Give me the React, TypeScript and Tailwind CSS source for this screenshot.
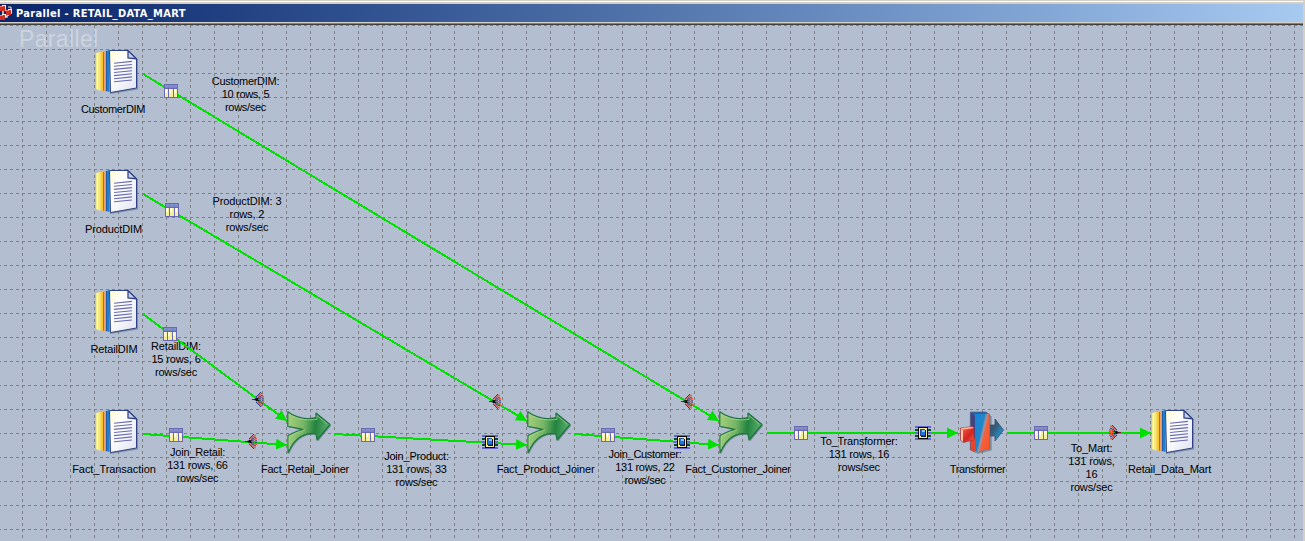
import React from "react";

const LINK = "#00e000";

const docs: [number, number][] = [[95, 49], [95, 169], [95, 289], [95, 409], [1151, 409]];
const joiners = [287, 527, 719];
const tables: [number, number][] = [[164, 84], [165, 203], [163, 327], [169, 428], [361, 428], [601, 428], [794, 426], [1034, 426]];
const chips: [number, number][] = [[482, 435], [674, 435], [915, 426]];
const fans: [number, number][] = [[252, 392], [245, 434], [489, 394], [681, 394]];

const links: [number, number, number, number][] = [
  [143, 74, 719, 421],
  [143, 194, 527, 421],
  [143, 314, 287, 421],
  [143, 434, 287, 445],
  [334, 434, 527, 445],
  [574, 434, 719, 445],
  [767, 433, 958, 433],
  [1007, 433, 1151, 433],
];

const labels: { x: number; y: number; ls?: number; lines: string[] }[] = [
  { x: 113, y: 103, ls: -0.35, lines: ["CustomerDIM"] },
  { x: 113.5, y: 223, ls: -0.12, lines: ["ProductDIM"] },
  { x: 114, y: 343, ls: -0.15, lines: ["RetailDIM"] },
  { x: 114, y: 463, ls: -0.06, lines: ["Fact_Transaction"] },
  { x: 305, y: 463, ls: -0.2, lines: ["Fact_Retail_Joiner"] },
  { x: 545.5, y: 463, ls: -0.2, lines: ["Fact_Product_Joiner"] },
  { x: 738, y: 463, ls: -0.3, lines: ["Fact_Customer_Joiner"] },
  { x: 977.5, y: 463, ls: -0.35, lines: ["Transformer"] },
  { x: 1169.5, y: 463, ls: -0.15, lines: ["Retail_Data_Mart"] },
  { x: 245.5, y: 75, ls: -0.3, lines: ["CustomerDIM:", "10 rows, 5", "rows/sec"] },
  { x: 247, y: 195, ls: -0.1, lines: ["ProductDIM: 3", "rows, 2", "rows/sec"] },
  { x: 176, y: 340, ls: -0.15, lines: ["RetailDIM:", "15 rows, 6", "rows/sec"] },
  { x: 197.5, y: 446, ls: -0.2, lines: ["Join_Retail:", "131 rows, 66", "rows/sec"] },
  { x: 416.5, y: 450, ls: -0.2, lines: ["Join_Product:", "131 rows, 33", "rows/sec"] },
  { x: 645, y: 448, ls: -0.3, lines: ["Join_Customer:", "131 rows, 22", "rows/sec"] },
  { x: 859, y: 435, ls: -0.2, lines: ["To_Transformer:", "131 rows, 16", "rows/sec"] },
  { x: 1091.5, y: 442, ls: -0.15, lines: ["To_Mart:", "131 rows,", "16", "rows/sec"] },
];

function DocIcon({ x, y }: { x: number; y: number }) {
  return (
    <g transform={`translate(${x} ${y})`}>
      <path d="M15 44.3L42.3 39.8V11" fill="none" stroke="#59758c" strokeWidth="1.5" opacity=".6" />
      <path d="M1 4L5 3V42L1 40Z" fill="#f3ea8a" />
      <path d="M2.5 4V40" stroke="#fdf9b8" />
      <path d="M5 3L8 2.5V42L5 41Z" fill="#f6c52c" />
      <path d="M5.7 3.5V41" stroke="#fbe27a" strokeWidth=".8" />
      <path d="M8 2.5L11 2V42.5L8 41.5Z" fill="#f2a06c" />
      <path d="M8.5 3V41.5" stroke="#d05c30" />
      <path d="M11 2L14.5 1V43L11 42Z" fill="#1c80cc" />
      <path d="M11.4 2V42" stroke="#24509a" strokeWidth=".8" />
      <path d="M14.5 1.5H33L41.5 10V39L15.5 43.5Z" fill="url(#paper)" stroke="#304080" />
      <path d="M33 1.5V9L41.5 10Z" fill="#c7d3ec" stroke="#304080" strokeWidth="1.3" />
      {[0, 1, 2, 3, 4, 5, 6].map((i) => (
        <path key={i} d={`M19 ${14.2 + i * 3.1}L37 ${12.4 + i * 3.1}`} stroke="#6869ae" strokeWidth="1.1" />
      ))}
    </g>
  );
}

function JoinIcon({ x }: { x: number }) {
  const d = "M.8 .8C6 5 15 8 22 7.5C26 7 28 7 29 6.5L29 2L43 13.5L30 29L29 23C16 21 7 28 1 42V24.5C6 22 9 20 16 18.5C9 17 5 15.5 .8 15.5Z";
  return (
    <g transform={`translate(${x} 411)`}>
      <path d={d} transform="translate(1.2 1.2)" fill="#526b70" opacity=".6" />
      <path d={d} fill="url(#join)" stroke="#1c7446" strokeWidth="1.2" strokeLinejoin="round" />
      <path d="M2 3C9 8 18 9.5 30 8.5V4.5L40 13" fill="none" stroke="#b2d99a" opacity=".65" />
      <path d="M2 38V26C8 22 12 20.5 18 19" fill="none" stroke="#c1df95" opacity=".5" />
    </g>
  );
}

function TableIcon({ x, y }: { x: number; y: number }) {
  return (
    <g transform={`translate(${x} ${y})`} shapeRendering="crispEdges">
      <rect width="14" height="14" fill="#6868b4" />
      <rect x="1" y="1" width="12" height="3" fill="#7584c6" />
      {[1, 5, 10].map((c) => (
        <g key={c}>
          <rect x={c} y="5" width={c === 5 ? 4 : 3} height="8" fill="#f7efa0" />
          <rect x={c} y="5" width="2" height="4" fill="#fffde4" />
          <rect x={c} y="1" width={c === 5 ? 4 : 3} height="2" fill="#8490c7" />
        </g>
      ))}
    </g>
  );
}

function ChipIcon({ x, y }: { x: number; y: number }) {
  return (
    <g transform={`translate(${x} ${y})`} shapeRendering="crispEdges">
      <rect y="0" width="16" height="2" fill="#6666cc" />
      <rect y="3" width="16" height="2" fill="#064d2c" />
      <rect y="6" width="16" height="2" fill="#6666cc" />
      <rect y="9" width="16" height="2" fill="#064d2c" />
      <rect y="12" width="16" height="2" fill="#6666cc" />
      <rect x="3" y="1" width="10" height="12" fill="#000" />
      <rect x="4" y="2" width="8" height="10" fill="#fff08c" />
      <rect x="6" y="4" width="5" height="7" fill="#101840" />
      <rect x="5" y="3" width="5" height="7" fill="#1b4aa8" />
      <rect x="6" y="4" width="4" height="5" fill="#1e78dc" />
      <rect x="7" y="4" width="3" height="2" fill="#8cc8ff" />
    </g>
  );
}

function FanIcon({ x, y, flip }: { x: number; y: number; flip?: boolean }) {
  return (
    <g transform={`translate(${x} ${y})${flip ? " translate(12 0) scale(-1 1)" : ""}`} fill="none">
      <path d="M4 5L9 0M4 10L9 15M6 5.5L11 3M6 9.5L11 12" stroke="#1c3f9c" strokeWidth="1" />
      <path d="M5.5 4.8L10.5 .8M5.5 10.2L10.5 14.2M7 6L12 4.6M7 9L12 10.4" stroke="#f04a26" strokeWidth="1.3" />
      <path d="M7 6.7H12M7 8.3H12" stroke="#1c3f9c" strokeWidth=".8" strokeDasharray="2 1" />
      <path d="M7 7.5H12" stroke="#f4582e" strokeWidth="1.2" />
      <path d="M0 7.5H3" stroke="#78202a" />
      <path d="M2.5 7.5H6.5M4 6L6.5 9M4 9L6.5 6" stroke="#080818" strokeWidth="1.3" />
    </g>
  );
}

function TransformerIcon() {
  return (
    <g transform="translate(960 411)">
      <path d="M17 42.3L31 39V5" fill="none" stroke="#59656c" strokeWidth="1.5" opacity=".5" />
      <path d="M30 14H35V8L43.5 19L35 30V25H30Z" fill="url(#arrow)" stroke="#31516c" strokeWidth=".8" />
      <path d="M10.3 1L15 4V41L10.3 38Z" fill="#414482" />
      <path d="M10.3 1H26L30 4L15 5Z" fill="#2465aa" />
      <path d="M15 3H30V38L16 41L15 40Z" fill="url(#split)" />
      <path d="M10.3 29L15 27V41L10.3 39Z" fill="#e94328" />
      <path d="M10.3 1H26L30 4V38L16 41.5L10.3 39Z" fill="none" stroke="#526074" strokeWidth=".6" />
      <path d="M.5 17L12 15.5L14 17V29L3 31.5L.5 29Z" fill="url(#red)" stroke="#9b3442" strokeWidth=".6" />
      <path d="M.8 17L12 15.7L14 17L3 18.8Z" fill="#ffad8d" />
      <path d="M1 18V29L3 31V19Z" fill="#ffc1a5" />
    </g>
  );
}

function TitleIcon() {
  return (
    <svg className="block h-[18px] w-[14px] shrink-0" viewBox="0 4 14 18">
      <path d="M3 9L11 13L4 18M3 9V18" fill="none" stroke="#eee8d5" strokeWidth="1.5" />
      {[[1, 7], [7, 11], [1, 16]].map(([x, y]) => (
        <g key={y}>
          <rect x={x + 1} y={y - 2} width="4" height="4" fill="#fff5dc" />
          <rect x={x - 1} y={y - 1} width="5" height="5" fill="#ce2c25" />
          <rect x={x - 1} y={y - 1} width="3" height="1" fill="#ff8069" />
        </g>
      ))}
      <path d="M8 7H11V9M8 17H5" fill="none" stroke="#f6edd8" />
    </svg>
  );
}

export default function App() {
  return (
    <div className="flex h-[541px] w-[1305px] flex-col overflow-hidden bg-[#d4d0c8]">
      <div className="h-px bg-[#d4d0c8]" />
      <div className="mr-0.5 h-px bg-white" />
      <div className="h-0.5 bg-[#d4d0c8]" />
      <header className="mr-0.5 flex h-[18px] shrink-0 items-center bg-linear-to-r from-[#0a246a] to-[#a6caf0]">
        <TitleIcon />
        <h1 className="ml-[2px] whitespace-nowrap pt-px font-['DejaVu_Sans_Condensed','DejaVu_Sans',sans-serif] text-[11px] font-bold leading-[17px] tracking-[0.33px] text-white">
          Parallel - RETAIL_DATA_MART
        </h1>
      </header>
      <div className="h-px bg-[#d4d0c8]" />
      <div className="mr-0.5 h-px bg-[#808080]" />
      <div className="mr-0.5 h-px bg-[#404040]" />
      <main className="relative mr-0.5 flex-1 overflow-hidden bg-[#b3bed1] font-['Liberation_Sans',Arial,sans-serif]">
        <svg className="absolute left-0 top-[-25px]" width="1303" height="541" shapeRendering="crispEdges">
          <defs>
            <pattern id="grid" x="22" y="25" width="24" height="24" patternUnits="userSpaceOnUse">
              <path d="M0 .5H24M.5 0V24" stroke="#808080" strokeDasharray="3 3" />
            </pattern>
          </defs>
          <rect width="1303" height="541" fill="url(#grid)" />
        </svg>
        <div className="absolute left-[19px] top-[1px] text-[23px] leading-[26px] tracking-[0.35px] text-[#cdd5df]">Parallel</div>
        {labels.map((l) => (
          <div
            key={l.lines[0]}
            className="absolute -mt-[25px] w-40 -translate-x-1/2 text-center text-[11px] leading-[13px] text-black"
            style={{ left: l.x, top: l.y, letterSpacing: l.ls }}
          >
            {l.lines.map((t) => (
              <div key={t}>{t}</div>
            ))}
          </div>
        ))}
        <svg className="absolute left-0 top-[-25px]" width="1303" height="541">
          <defs>
            <linearGradient id="paper" x1="0" y1="0" x2="1" y2="1">
              <stop offset="0" stopColor="#fffbd0" />
              <stop offset=".35" stopColor="#fff" />
              <stop offset="1" stopColor="#dfe3f2" />
            </linearGradient>
            <linearGradient id="join" x1="0" y1="0" x2="1" y2=".1">
              <stop offset="0" stopColor="#a8d07c" />
              <stop offset=".4" stopColor="#76b665" />
              <stop offset=".68" stopColor="#23843f" />
              <stop offset="1" stopColor="#5aae6c" />
            </linearGradient>
            <linearGradient id="split" x1="0" y1=".2" x2="1" y2=".8">
              <stop offset="0" stopColor="#1685d8" />
              <stop offset=".4" stopColor="#2385c8" />
              <stop offset=".52" stopColor="#a694a0" />
              <stop offset=".6" stopColor="#f06140" />
              <stop offset="1" stopColor="#ff5424" />
            </linearGradient>
            <linearGradient id="arrow" x1="0" y1="0" x2="1" y2="1">
              <stop offset="0" stopColor="#30476c" />
              <stop offset=".4" stopColor="#385c7c" />
              <stop offset=".85" stopColor="#12a1df" />
            </linearGradient>
            <linearGradient id="red" x1="0" y1="0" x2="1" y2="1">
              <stop offset="0" stopColor="#f46a49" />
              <stop offset=".6" stopColor="#d42422" />
              <stop offset="1" stopColor="#f16440" />
            </linearGradient>
            <marker id="head" markerUnits="userSpaceOnUse" markerWidth="12" markerHeight="12" refX="11" refY="6" orient="auto">
              <path d="M0 .5L11 6L0 11.5Z" fill={LINK} />
            </marker>
          </defs>
          {links.map(([x1, y1, x2, y2]) => (
            <line key={`${x1}-${y1}`} x1={x1} y1={y1} x2={x2} y2={y2} stroke={LINK} strokeWidth="2" shapeRendering="crispEdges" markerEnd="url(#head)" />
          ))}
          {docs.map(([x, y]) => <DocIcon key={`${x}-${y}`} x={x} y={y} />)}
          {joiners.map((x) => <JoinIcon key={x} x={x} />)}
          <TransformerIcon />
          {tables.map(([x, y]) => <TableIcon key={`${x}-${y}`} x={x} y={y} />)}
          {chips.map(([x, y]) => <ChipIcon key={x} x={x} y={y} />)}
          {fans.map(([x, y]) => <FanIcon key={x} x={x} y={y} />)}
          <FanIcon x={1109} y={425} flip />
        </svg>
      </main>
    </div>
  );
}
